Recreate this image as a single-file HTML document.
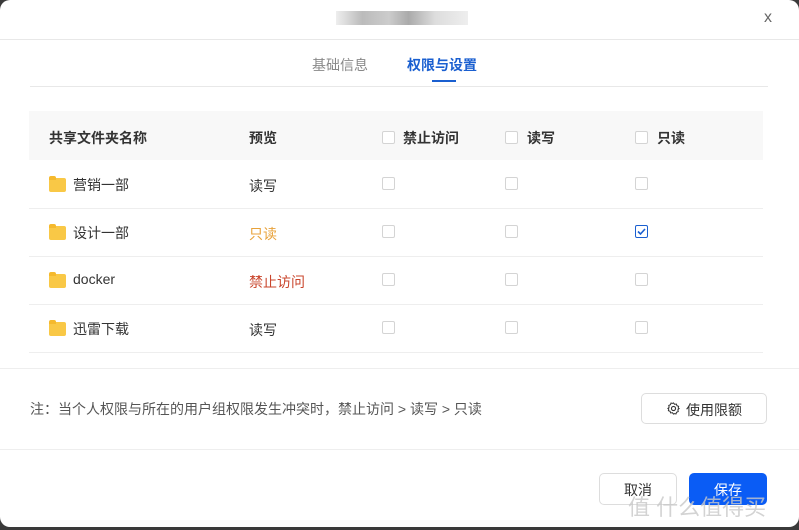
<!DOCTYPE html>
<html><head><meta charset="utf-8"><style>
*{box-sizing:border-box;margin:0;padding:0}
body{width:799px;height:530px;background:#3a3a3a;font-family:"Liberation Sans","Noto Sans CJK SC",sans-serif;position:relative;overflow:hidden}
.dlg{position:absolute;left:0;top:0;width:799px;height:527px;background:#fff;border-radius:10px}
.a{position:absolute}
.hl{position:absolute;height:1px;background:#e8e8e8}
.cb{position:absolute;width:13px;height:13px;border:1px solid #d4d4d4;border-radius:2px;background:#fff}
.t{position:absolute;font-size:14px;color:#333;white-space:nowrap}
.fold{position:absolute;width:17px;height:14px;background:#f9c846;border-radius:2px}
.fold:before{content:"";position:absolute;left:0;top:-2px;width:7px;height:4px;background:#f5b92d;border-radius:2px 2px 0 0}
</style></head><body>
<div class="dlg">
<div class="a" style="left:336px;top:11px;width:132px;height:14px;background:linear-gradient(90deg,#eee,#bbb 20%,#ccc 40%,#aaa 55%,#ddd 75%,#eee)"></div>
<div class="t" style="left:764px;top:9px;font-size:16px;color:#666;font-weight:300">x</div>
<div class="hl" style="left:0;top:39px;width:799px"></div>
<div class="t" style="left:312px;top:55px;color:#888">基础信息</div>
<div class="t" style="left:407px;top:55px;color:#1a5fd0;font-weight:bold">权限与设置</div>
<div class="a" style="left:432px;top:80px;width:24px;height:2px;background:#1a5fd0"></div>
<div class="hl" style="left:30px;top:86px;width:738px"></div>
<div class="a" style="left:29px;top:111px;width:734px;height:49px;background:#f8f8f8"></div>
<div class="t" style="left:49px;top:128px;font-weight:bold">共享文件夹名称</div>
<div class="t" style="left:249px;top:128px;font-weight:bold">预览</div>
<div class="cb" style="left:382px;top:131px"></div><div class="t" style="left:403px;top:128px;font-weight:bold">禁止访问</div>
<div class="cb" style="left:505px;top:131px"></div><div class="t" style="left:527px;top:128px;font-weight:bold">读写</div>
<div class="cb" style="left:635px;top:131px"></div><div class="t" style="left:657px;top:128px;font-weight:bold">只读</div>

<div class="fold" style="left:49px;top:178px"></div><div class="t" style="left:73px;top:175px">营销一部</div><div class="t" style="left:249px;top:176px">读写</div>
<div class="cb" style="left:382px;top:177px"></div><div class="cb" style="left:505px;top:177px"></div><div class="cb" style="left:635px;top:177px"></div>
<div class="hl" style="left:29px;top:208px;width:734px;background:#eee"></div>

<div class="fold" style="left:49px;top:226px"></div><div class="t" style="left:73px;top:223px">设计一部</div><div class="t" style="left:249px;top:224px;color:#e8a23a">只读</div>
<div class="cb" style="left:382px;top:225px"></div><div class="cb" style="left:505px;top:225px"></div>
<div class="cb" style="left:635px;top:225px;border-color:#1a5fd0"><svg width="11" height="11" viewBox="0 0 11 11" style="position:absolute;left:0;top:0"><path d="M2 5.5l2.5 2.5 4.5-5" stroke="#1a5fd0" stroke-width="1.6" fill="none"/></svg></div>
<div class="hl" style="left:29px;top:256px;width:734px;background:#eee"></div>

<div class="fold" style="left:49px;top:274px"></div><div class="t" style="left:73px;top:271px">docker</div><div class="t" style="left:249px;top:272px;color:#c9442b">禁止访问</div>
<div class="cb" style="left:382px;top:273px"></div><div class="cb" style="left:505px;top:273px"></div><div class="cb" style="left:635px;top:273px"></div>
<div class="hl" style="left:29px;top:304px;width:734px;background:#eee"></div>

<div class="fold" style="left:49px;top:322px"></div><div class="t" style="left:73px;top:319px">迅雷下载</div><div class="t" style="left:249px;top:320px">读写</div>
<div class="cb" style="left:382px;top:321px"></div><div class="cb" style="left:505px;top:321px"></div><div class="cb" style="left:635px;top:321px"></div>
<div class="hl" style="left:29px;top:352px;width:734px;background:#eee"></div>

<div class="hl" style="left:0;top:368px;width:799px;background:#eee"></div>
<div class="t" style="left:30px;top:399px;font-size:14px;color:#555">注：当个人权限与所在的用户组权限发生冲突时，禁止访问 &gt; 读写 &gt; 只读</div>
<div class="a" style="left:641px;top:393px;width:126px;height:31px;border:1px solid #ddd;border-radius:5px"></div>
<svg class="a" style="left:667px;top:402px" width="13" height="13" viewBox="0 0 14 14"><circle cx="7" cy="7" r="2.2" fill="none" stroke="#333" stroke-width="1.2"/><path d="M7 1l1.2 1.5 1.9-.3.6 1.8 1.8.7-.4 1.9L13 7l-1.3 1.4.4 1.9-1.8.7-.6 1.8-1.9-.3L7 13l-1.2-1.5-1.9.3-.6-1.8-1.8-.7.4-1.9L1 7l1.3-1.4-.4-1.9 1.8-.7.6-1.8 1.9.3z" fill="none" stroke="#333" stroke-width="1.1"/></svg>
<div class="t" style="left:686px;top:400px;font-size:14px">使用限额</div>
<div class="hl" style="left:0;top:449px;width:799px;background:#eee"></div>
<div class="a" style="left:599px;top:473px;width:78px;height:32px;border:1px solid #ddd;border-radius:5px"></div>
<div class="t" style="left:624px;top:480px">取消</div>
<div class="a" style="left:689px;top:473px;width:78px;height:32px;background:#0a5cf5;border-radius:5px"></div>
<div class="t" style="left:714px;top:480px;color:#fff">保存</div>
<div class="t" style="left:628px;top:490px;font-size:22px;color:rgba(200,200,200,.8)">值 什么值得买</div>
</div>
</body></html>
